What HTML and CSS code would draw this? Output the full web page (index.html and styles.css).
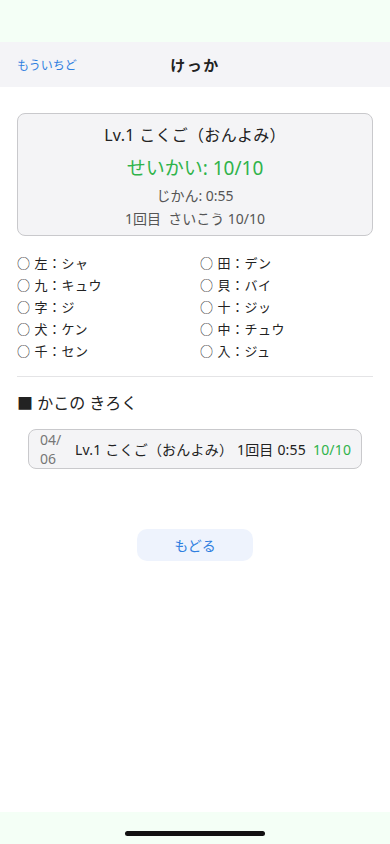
FILE: index.html
```html
<!DOCTYPE html>
<html lang="ja">
<head>
<meta charset="utf-8">
<meta name="viewport" content="width=device-width, initial-scale=1">
<link rel="stylesheet" href="styles.css">
</head>
<body>
<div class="screen">
  <div class="status"></div>
  <header class="nav">
    <a class="nav-left">もういちど</a>
    <h1 class="nav-title">けっか</h1>
  </header>
  <main class="content">
    <section class="card">
      <div class="card-title">Lv.1 こくご（おんよみ）</div>
      <div class="card-score">せいかい: 10/10</div>
      <div class="card-sub first">じかん: 0:55</div>
      <div class="card-sub">1回目&nbsp;&nbsp;さいこう 10/10</div>
    </section>
    <ul class="answers">
      <li>○ 左：シャ</li>
      <li>○ 田：デン</li>
      <li>○ 九：キュウ</li>
      <li>○ 貝：バイ</li>
      <li>○ 字：ジ</li>
      <li>○ 十：ジッ</li>
      <li>○ 犬：ケン</li>
      <li>○ 中：チュウ</li>
      <li>○ 千：セン</li>
      <li>○ 入：ジュ</li>
    </ul>
    <hr class="divider">
    <h2 class="section-title">■ かこの きろく</h2>
    <div class="history">
      <span class="h-date">04/06</span>
      <span class="h-text">Lv.1 こくご（おんよみ） 1回目 0:55</span>
      <span class="h-score">10/10</span>
    </div>
    <div class="btn-wrap">
      <button class="btn">もどる</button>
    </div>
  </main>
  <div class="home"><span class="home-bar"></span></div>
</div>
</body>
</html>
```
FILE: styles.css
```css
* { box-sizing: border-box; }
html, body { margin: 0; padding: 0; background: #fff; }
body {
  font-family: "Noto Sans", "Noto Sans CJK JP", sans-serif;
  color: #222;
}
.screen {
  width: 390px;
  height: 844px;
  display: flex;
  flex-direction: column;
}
.status { height: 42px; background: #f4fff6; flex: none; }
.nav {
  height: 45px;
  flex: none;
  background: #f4f4f7;
  display: flex;
  align-items: center;
  position: relative;
  padding: 0 17px;
}
.nav-left { color: #2f7fe0; font-size: 12px; }
.nav-title {
  position: absolute;
  left: 0; right: 0;
  text-align: center;
  margin: 0;
  font-size: 15px;
  font-weight: 700;
  letter-spacing: 1.5px;
  color: #222;
  pointer-events: none;
}
.content {
  flex: 1;
  padding: 26px 17px 0;
  display: flex;
  flex-direction: column;
}
.card {
  background: #f4f4f6;
  border: 1px solid #c9c9cc;
  border-radius: 8px;
  height: 123px;
  padding-top: 9px;
  text-align: center;
  display: flex;
  flex-direction: column;
  align-items: center;
}
.card-title { font-size: 16px; line-height: 24px; color: #222; letter-spacing: 0.3px; }
.card-score { font-size: 19px; line-height: 28px; color: #2fb34a; margin-top: 7px; }
.card-sub { font-size: 14px; line-height: 23px; color: #555; }
.card-sub.first { margin-top: 2px; }
.answers {
  list-style: none;
  margin: 16px 0 0;
  padding: 0;
  display: grid;
  grid-template-columns: 183px 1fr;
  row-gap: 0;
}
.answers li { font-size: 13px; line-height: 22px; color: #222; letter-spacing: 0.5px; }
.divider {
  border: none;
  border-top: 1px solid #e4e4e6;
  margin: 14px 0 0;
  height: 0;
}
.section-title {
  margin: 14px 0 0;
  font-size: 16px;
  font-weight: 400;
  line-height: 24px;
  color: #222;
}
.history {
  margin: 14px 11px 0 11px;
  height: 40px;
  border: 1px solid #c9c9cc;
  border-radius: 8px;
  background: #f4f4f6;
  display: flex;
  align-items: center;
  padding: 0 10px 0 11px;
  font-size: 14px;
  color: #222;
}
.h-date {
  width: 24px;
  color: #777;
  line-height: 19px;
  word-break: break-all;
  flex: none;
}
.h-text { margin-left: 11px; white-space: nowrap; letter-spacing: 0.2px; }
.h-score { margin-left: 7px; color: #2fb34a; white-space: nowrap; letter-spacing: 0.2px; }
.btn-wrap { display: flex; justify-content: center; margin-top: 60px; }
.btn {
  width: 116px;
  height: 32px;
  border: none;
  border-radius: 10px;
  background: #eef3fd;
  color: #2f7fe0;
  font-family: inherit;
  font-size: 14px;
}
.home {
  height: 32px;
  flex: none;
  background: #f4fff6;
  display: flex;
  justify-content: center;
  padding-top: 19px;
}
.home-bar { width: 140px; height: 5px; border-radius: 3px; background: #111; }
```
